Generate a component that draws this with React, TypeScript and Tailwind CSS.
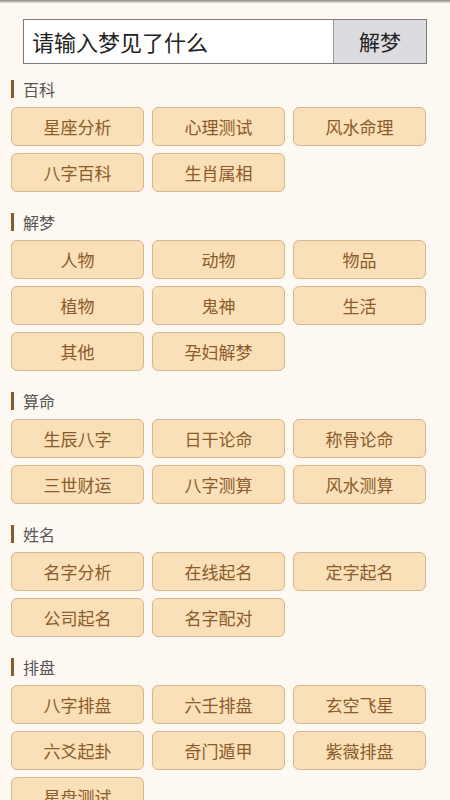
import React from 'react';

const sections: { title: string; items: string[] }[] = [
  { title: '百科', items: ['星座分析', '心理测试', '风水命理', '八字百科', '生肖属相'] },
  { title: '解梦', items: ['人物', '动物', '物品', '植物', '鬼神', '生活', '其他', '孕妇解梦'] },
  { title: '算命', items: ['生辰八字', '日干论命', '称骨论命', '三世财运', '八字测算', '风水测算'] },
  { title: '姓名', items: ['名字分析', '在线起名', '定字起名', '公司起名', '名字配对'] },
  { title: '排盘', items: ['八字排盘', '六壬排盘', '玄空飞星', '六爻起卦', '奇门遁甲', '紫薇排盘', '星盘测试'] },
];

const App: React.FC = () => {
  return (
    <div
      className="h-[800px] w-[450px] overflow-hidden bg-[#fdf8f1]"
      style={{ fontFamily: '"Noto Sans CJK SC", "Noto Sans", sans-serif' }}
    >
      <div className="h-[3px] bg-gradient-to-b from-[#8a8a8a] to-[#e8e4dd]" />
      <div className="px-[23px] pt-[16px]">
        <div className="flex h-[45px] w-[404px] border border-[#7a7a7a]">
          <div className="flex flex-1 items-center bg-white pl-[8px] text-[22px] text-[#222]">
            请输入梦见了什么
          </div>
          <div className="flex w-[93px] items-center justify-center border-l border-[#9a9a9a] bg-[#dcdbe0] text-[21px] text-[#222]">
            解梦
          </div>
        </div>
      </div>
      <div className="px-[11px] pt-[16px]">
        {sections.map((s, i) => (
          <div key={s.title} className={i === 0 ? '' : 'mt-[21px]'}>
            <div className="flex h-[18px] items-center gap-[9px]">
              <div className="h-[18px] w-[3px] bg-[#8b5a2b]" />
              <span className="text-[16px] leading-none text-[#555]">{s.title}</span>
            </div>
            <div className="mt-[9px] grid grid-cols-[repeat(3,133px)] gap-x-[8px] gap-y-[7px]">
              {s.items.map((item) => (
                <div
                  key={item}
                  className="flex h-[39px] items-center justify-center rounded-[6px] border border-[#d6b68c] bg-[#f9e0b8] text-[17px] text-[#8b5a2b]"
                >
                  {item}
                </div>
              ))}
            </div>
          </div>
        ))}
      </div>
    </div>
  );
};

export default App;
